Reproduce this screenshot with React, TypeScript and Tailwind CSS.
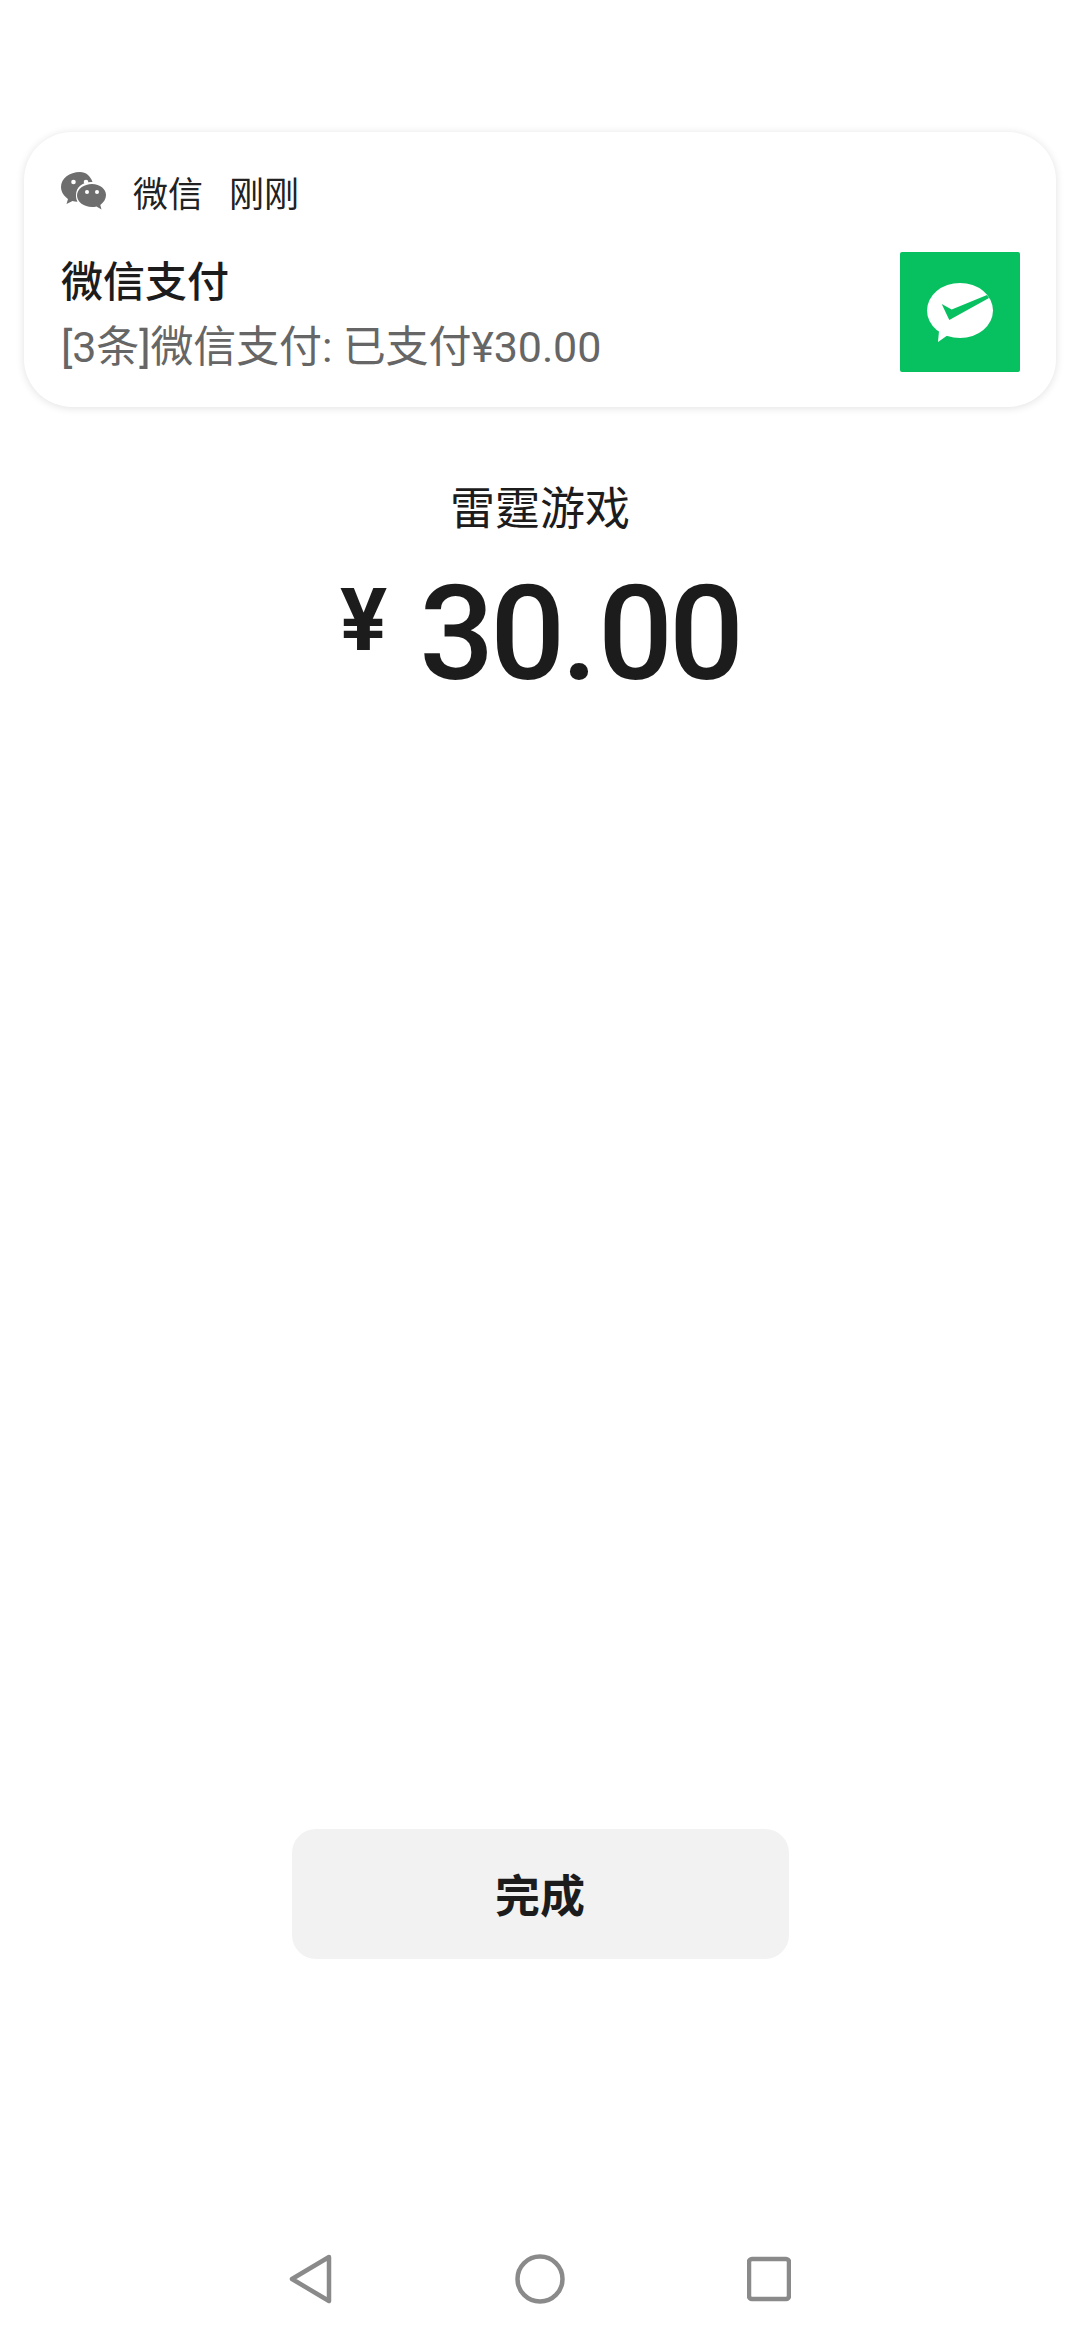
export default function App() {
  const cjk = { fontFamily: 'Roboto, "Noto Sans CJK SC", sans-serif' };
  return (
    <div style={cjk} className="w-[1080px] h-[2340px] bg-white flex flex-col items-center overflow-hidden pt-[132px]">
      <div className="w-[1032px] h-[275px] rounded-[48px] bg-white shadow-[0_1px_8px_rgba(0,0,0,0.12)] flex justify-between pl-[37px] pr-[36px]">
        <div className="flex flex-col">
          <div className="flex items-center h-[40px] mt-[40px] text-[35px] leading-[40px] text-[#222222]">
            <svg width="46" height="40" viewBox="0 0 46 40" className="mr-[26px]">
              <path d="M19 0C8.500 0 0 6.500 0 15c0 5 3 9 7 12l-1.500 5 6-3c1.500.4 3 .6 5 .8C15 27 15 25 15 23c0-8 7-13 15-13h1.500C29.500 4 25 0 19 0z" fill="#6e6e6e" />
              <path d="M31 12c-8 0-15 5-15 11.500S23 35 31 35c1.500 0 3-.2 4.500-.6l5 3-1.200-4.500c3.500-2.500 5.700-6 5.700-9.900C45 17 39 12 31 12z" fill="#6e6e6e" />
              <circle cx="12.500" cy="10" r="2.300" fill="#fff" />
              <circle cx="25" cy="10" r="2.300" fill="#fff" />
              <circle cx="26" cy="20" r="2" fill="#fff" />
              <circle cx="36" cy="20" r="2" fill="#fff" />
            </svg>
            <span className="mt-[7px]">微信</span>
            <span className="mt-[7px] ml-[26px]">刚刚</span>
          </div>
          <div className="mt-[43px] text-[42px] leading-[56px] font-medium text-[#1c1c1c]">微信支付</div>
          <div className="mt-[8px] text-[43px] leading-[56px] tracking-[-0.13px] text-[#666666]">[3条]微信支付: 已支付¥30.00</div>
        </div>
        <div className="mt-[120px] w-[120px] h-[120px] bg-[#07c160] rounded-[2px] shrink-0">
          <svg width="120" height="120" viewBox="0 0 120 120">
            <ellipse cx="60" cy="58.500" rx="33" ry="27.500" fill="#fff" />
            <path d="M39 79l-1 11 10-7z" fill="#fff" />
            <path d="M41.700 52L51.700 57.500L87 43L89 46L49.300 68z" fill="#07c160" />
          </svg>
        </div>
      </div>

      <div className="mt-[73px] text-[45px] leading-[60px] text-[#1c1c1c]">雷霆游戏</div>

      <div className="mt-[29px] flex items-start text-[#1c1c1c] h-[130px] font-medium" style={{ fontFamily: 'Roboto, sans-serif' }}>
        <span className="text-[88px] leading-[130px] font-bold mr-[32px] -mt-[14px]">¥</span>
        <span className="text-[132px] leading-[130px] tracking-[-4px]">30<span className="tracking-[0px]">.</span>00</span>
      </div>

      <button className="mt-[1130px] w-[497px] h-[130px] rounded-[24px] bg-[#f2f2f2] text-[45px] font-bold text-[#1c1c1c] pt-[8px]">完成</button>

      <div className="mt-[296px] w-[502px] h-[48px] flex items-center justify-between">
        <svg width="44" height="50" viewBox="0 0 44 50">
          <path d="M40 3L3 25l37 22z" fill="none" stroke="#8a8a8a" strokeWidth="4.500" strokeLinejoin="round" />
        </svg>
        <svg width="50" height="50" viewBox="0 0 50 50">
          <circle cx="25" cy="25" r="22.500" fill="none" stroke="#8a8a8a" strokeWidth="4.500" />
        </svg>
        <svg width="44" height="46" viewBox="0 0 44 46">
          <rect x="2" y="3" width="40" height="40" rx="3" fill="none" stroke="#8a8a8a" strokeWidth="4.500" />
        </svg>
      </div>
    </div>
  );
}
